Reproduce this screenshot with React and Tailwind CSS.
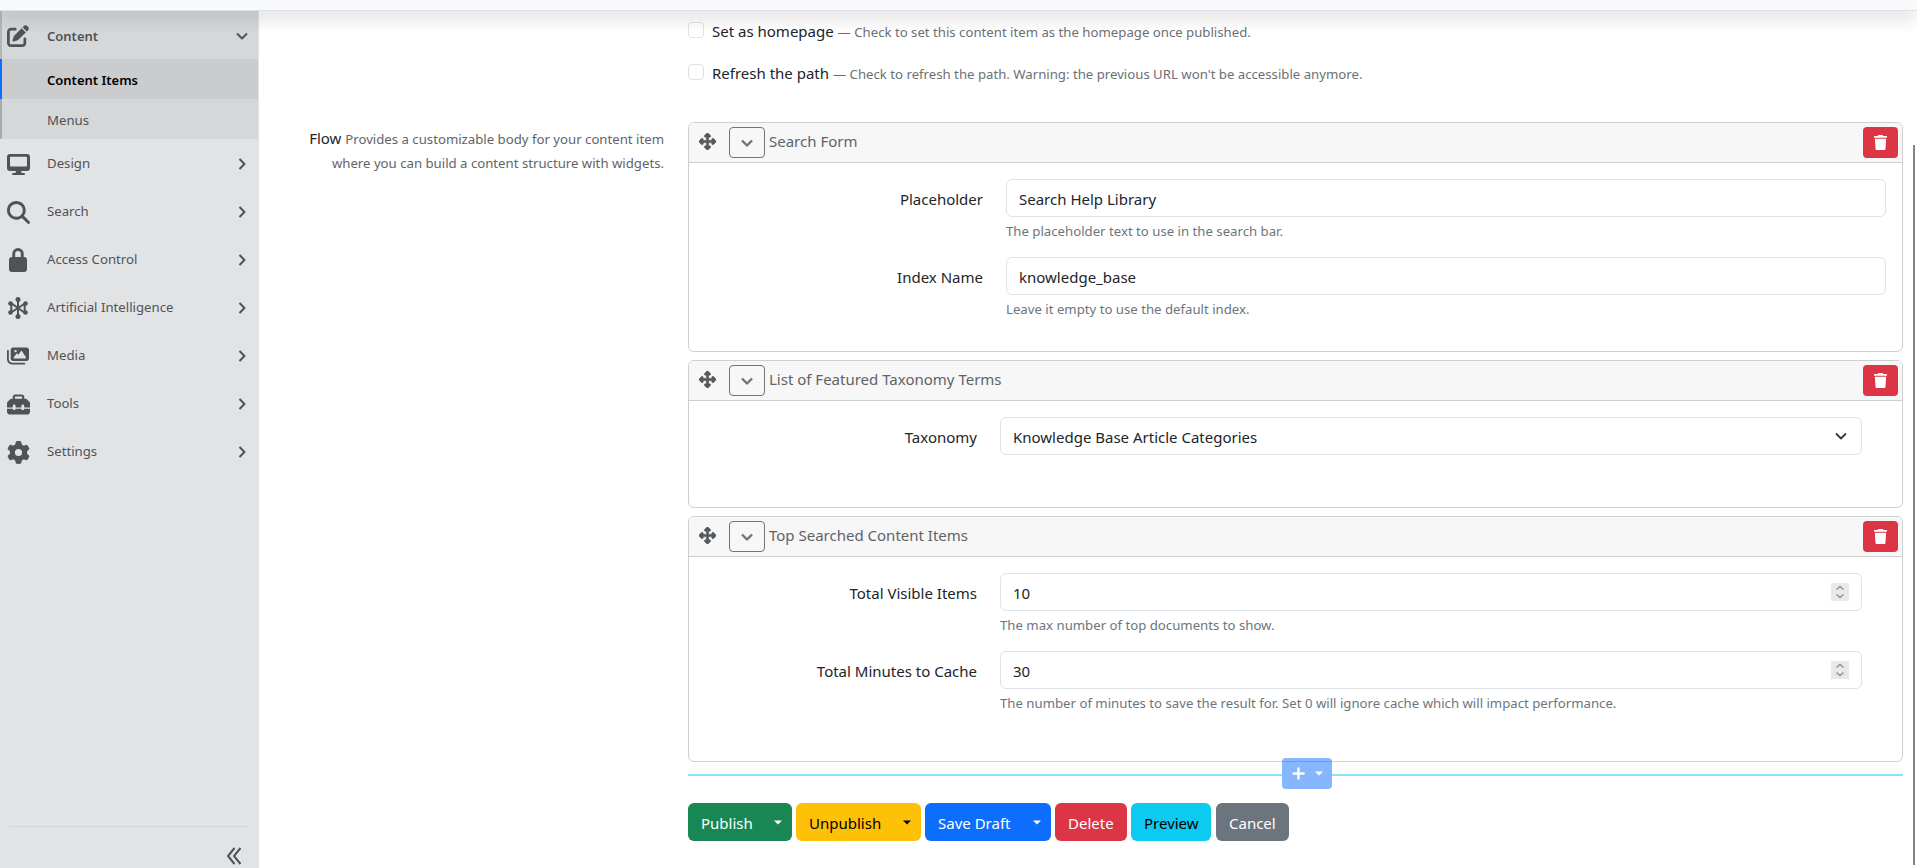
import { FaPenToSquare, FaMagnifyingGlass, FaImages, FaToolbox, FaGear, FaUpDownLeftRight, FaPlus, FaTrash } from 'react-icons/fa6';

function NodesIcon() {
  return (
    <svg width="20" height="22" viewBox="0 0 20 22" fill="none" stroke="currentColor" strokeWidth="2">
      <path d="M10 2v18M3.300 6v10M16.700 6v10M3 6l14 10M3 15.500l14-9" />
      <g fill="currentColor" stroke="none">
        <circle cx="10" cy="2.500" r="2.500" />
        <circle cx="10" cy="19.500" r="2.500" />
        <circle cx="2.500" cy="6.500" r="2.300" />
        <circle cx="2.500" cy="15.500" r="2.300" />
        <circle cx="17.500" cy="6.500" r="2.300" />
        <circle cx="17.500" cy="15.500" r="2.300" />
      </g>
    </svg>
  );
}

function DesktopIcon() {
  return (
    <svg width="23" height="21" viewBox="0 0 23 21" fill="currentColor">
      <path fillRule="evenodd" d="M3 0h17a3 3 0 0 1 3 3v11a3 3 0 0 1-3 3h-6l.6 2H17a1 1 0 0 1 0 2H6a1 1 0 0 1 0-2h2.400L9 17H3a3 3 0 0 1-3-3V3a3 3 0 0 1 3-3zm1 2.800a1 1 0 0 0-1 1V11.500a1 1 0 0 0 1 1h15a1 1 0 0 0 1-1V3.800a1 1 0 0 0-1-1z" />
    </svg>
  );
}

function LockIcon() {
  return (
    <svg width="18" height="24" viewBox="0 0 18 24" fill="currentColor">
      <path fillRule="evenodd" d="M3.300 9V5.700a5.700 5.700 0 0 1 11.400 0V9h.3a3 3 0 0 1 3 3v9a3 3 0 0 1-3 3H3a3 3 0 0 1-3-3v-9a3 3 0 0 1 3-3zm2.900 0h5.600V5.700a2.800 2.800 0 0 0-5.600 0z" />
    </svg>
  );
}

function Chevron({ d, size = 12, width = 2 }) {
  return (
    <svg width={size} height={size} viewBox="0 0 12 12" fill="none" stroke="currentColor" strokeWidth={width} strokeLinejoin="round">
      <path d={d} />
    </svg>
  );
}

const DOWN = 'M1 3.500l5 5l5-5';
const RIGHT = 'M3.500 1l5 5l-5 5';

const menu = [
  { label: 'Design', icon: <DesktopIcon /> },
  { label: 'Search', icon: <FaMagnifyingGlass size={23} /> },
  { label: 'Access Control', icon: <LockIcon /> },
  { label: 'Artificial Intelligence', icon: <NodesIcon /> },
  { label: 'Media', icon: <FaImages size={22} className="mr-px shrink-0" /> },
  { label: 'Tools', icon: <FaToolbox size={23} /> },
  { label: 'Settings', icon: <FaGear size={23} /> },
];

function Sidebar() {
  return (
    <aside className="flex w-[259px] shrink-0 flex-col border-r border-[#dee2e6] bg-[#e2e3e5] text-[13.2px] text-[#4f5357]">
      <div className="bg-[#d6d7d9]">
        <div className="flex h-12 items-center border-l-2 border-[#b4b5b7] pl-1 pr-[10px] pt-0.5">
          <span className="flex w-6 justify-center"><FaPenToSquare size={22} /></span>
          <span className="ml-[17px] flex-1 pt-px text-[13px] font-semibold">Content</span>
          <Chevron d={DOWN} />
        </div>
        <div className="flex h-10 items-center border-l-2 border-[#0d6efd] bg-[#cbccce] pl-[45px] pt-[3px] text-[13px] font-semibold text-black">Content Items</div>
        <div className="flex h-10 items-center border-l-2 border-[#a9aaac] pl-[45px] pt-[3px]">Menus</div>
      </div>
      {menu.map((m) => (
        <div key={m.label} className="flex h-12 items-center pl-[6px] pr-[10px] pt-0.5">
          <span className="flex w-6 shrink-0 justify-center">{m.icon}</span>
          <span className="ml-[17px] flex-1">{m.label}</span>
          <Chevron d={RIGHT} />
        </div>
      ))}
      <div className="mx-[9px] mt-auto flex h-[42px] justify-end border-t border-[#d3d5d6] pr-[7px] pt-5">
        <svg width="16" height="18" viewBox="0 0 16 18" fill="none" stroke="currentColor" strokeWidth="2"><path d="M8.500 1L2 9l6.500 8M14.500 1L8 9l6.500 8" /></svg>
      </div>
    </aside>
  );
}

function Check({ label, hint }) {
  return (
    <div className="flex h-[42px] items-start">
      <span className="mr-2 mt-[3px] size-4 rounded-[4px] border border-[#dee2e6]" />
      <p className="whitespace-nowrap text-[15px] leading-6">
        {label} <span className="text-[13.2px] text-[#6b7075]">— {hint}</span>
      </p>
    </div>
  );
}

function Widget({ title, children, height }) {
  return (
    <section className={`mb-2 flex flex-col rounded-md border border-[#cfcfd0] bg-white ${height}`}>
      <header className="flex h-10 shrink-0 items-center rounded-t-[5px] border-b border-[#cfcfd0] bg-[#f7f7f7] pl-[10px] pr-1">
        <FaUpDownLeftRight size={17} className="mb-[3px] stroke-current stroke-[20] text-[#565a5e]" />
        <span className="ml-[13px] mr-1 flex h-[31px] w-[36px] items-center justify-center rounded-[4px] border border-[#6c757d] pt-px text-[#6c757d]">
          <Chevron d={DOWN} width={2.4} />
        </span>
        <span className="flex-1 pb-0.5 text-[15px] text-[#5f6367]">{title}</span>
        <span className="flex h-[31px] w-[35px] items-center justify-center rounded-[4px] bg-[#dc3545] text-white">
          <FaTrash size={15} />
        </span>
      </header>
      <div className="flex-1 pt-4">{children}</div>
    </section>
  );
}

function Field({ label, value, hint, narrow, control }) {
  return (
    <div className={`flex ${narrow ? 'pr-10' : 'pr-4'} h-[78px]`}>
      <label className={`mr-[23px] flex h-[38px] shrink-0 items-center justify-end pt-0.5 text-[15px] ${narrow ? 'w-[288px]' : 'w-[294px]'}`}>{label}</label>
      <div className="flex-1">
        <div className="flex h-[38px] items-center justify-between rounded-md border border-[#dee2e6] px-3 text-[15px]">
          <span className="pt-0.5">{value}</span>
          {control}
        </div>
        {hint && <p className="mt-1 text-[13.2px] leading-[21px] text-[#6c757d]">{hint}</p>}
      </div>
    </div>
  );
}

function Spinner() {
  return (
    <svg width="18" height="18" viewBox="0 0 18 18" fill="none" stroke="#8f8f9d" strokeWidth="1.500">
      <rect width="18" height="18" fill="#e9e9ed" stroke="none" />
      <path d="M5.500 6.500l3.500-3l3.500 3M5.500 11.500l3.500 3l3.500-3" />
    </svg>
  );
}

function Caret() {
  return <svg width="8" height="5" viewBox="0 0 8 5" fill="currentColor"><path d="M0 .5h8l-4 4z" /></svg>;
}

function Action({ label, color, caret }) {
  return (
    <button className={`flex h-[38px] items-center rounded-md pl-[13px] text-left text-[15px] ${color}`}>
      <span className="flex-1 pt-0.5">{label}</span>
      {caret && <span className="pr-[10px]"><Caret /></span>}
    </button>
  );
}

export default function App() {
  return (
    <div className="relative flex h-[868px] w-[1917px] flex-col overflow-hidden bg-white text-[#212529] [font-family:'Noto_Sans',sans-serif]">
      <div className="z-10 h-[11px] shrink-0 border-b border-[#dee2e6] bg-[#f8f9fa] shadow-[0_8px_16px_rgba(0,0,0,0.15)]" />
      <div className="flex min-h-0 flex-1">
        <Sidebar />
        <main className="flex flex-1 items-start">
          <p className="mt-[115px] w-[405px] whitespace-nowrap text-right text-[13.2px] leading-6 text-[#5f6468]">
            <span className="text-[15px] text-[#212529]">Flow </span>Provides a customizable body for your content item<br />where you can build a content structure with widgets.
          </p>
          <div className="ml-6 w-[1215px] pt-2">
            <Check label="Set as homepage" hint="Check to set this content item as the homepage once published." />
            <Check label="Refresh the path" hint="Check to refresh the path. Warning: the previous URL won't be accessible anymore." />
            <div className="pt-[19px]">
              <Widget title="Search Form" height="h-[230px]">
                <Field label="Placeholder" value="Search Help Library" hint="The placeholder text to use in the search bar." />
                <Field label="Index Name" value="knowledge_base" hint="Leave it empty to use the default index." />
              </Widget>
              <Widget title="List of Featured Taxonomy Terms" height="h-[148px]">
                <Field narrow label="Taxonomy" value="Knowledge Base Article Categories" control={<span className="mr-0.5 text-[#343a40]"><Chevron d={DOWN} width={1.8} /></span>} />
              </Widget>
              <Widget title="Top Searched Content Items" height="h-[246px]">
                <Field narrow label="Total Visible Items" value="10" hint="The max number of top documents to show." control={<Spinner />} />
                <Field narrow label="Total Minutes to Cache" value="30" hint="The number of minutes to save the result for. Set 0 will ignore cache which will impact performance." control={<Spinner />} />
              </Widget>
            </div>
            <div className="relative mt-3 flex h-0.5 justify-between">
              <div className="w-[594px] bg-[#86e5fb]" />
              <div className="absolute left-[594px] top-[-16px] flex h-[31px] w-[50px] items-center justify-center gap-[9px] rounded-[4px] bg-[#0d6efd]/50 text-white">
                <FaPlus size={15} className="stroke-current stroke-[16]" /><Caret />
              </div>
              <div className="w-[571px] bg-[#86e5fb]" />
            </div>
            <div className="mt-[27px] flex">
              <Action label="Publish" color="mr-1 w-[104px] bg-[#198754] text-white" caret />
              <Action label="Unpublish" color="mr-1 w-[125px] bg-[#ffc107] text-black" caret />
              <Action label="Save Draft" color="mr-1 w-[126px] bg-[#0d6efd] text-white" caret />
              <Action label="Delete" color="mr-1 w-[72px] bg-[#dc3545] text-white" />
              <Action label="Preview" color="mr-[5px] w-[80px] bg-[#0dcaf0] text-black" />
              <Action label="Cancel" color="w-[73px] bg-[#6c757d] text-white" />
            </div>
          </div>
          <div className="ml-auto mr-0.5 mt-[134px] h-[720px] w-0.5 bg-[#858585]" />
        </main>
      </div>
    </div>
  );
}
